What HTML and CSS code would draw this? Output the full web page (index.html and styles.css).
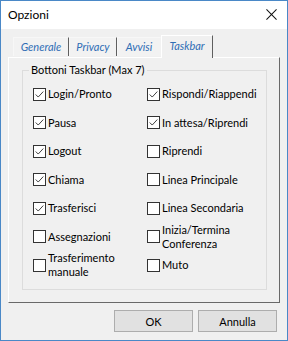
FILE: index.html
```html
<!DOCTYPE html>
<html>
<head>
<meta charset="utf-8">
<link rel="stylesheet" href="styles.css">
</head>
<body>
<div class="window">
  <div class="titlebar">
    <span class="title">Opzioni</span>
    <svg class="close" width="12" height="12" viewBox="0 0 12 12"><path d="M0.5 0.5 L11.5 11.5 M11.5 0.5 L0.5 11.5" stroke="#111" stroke-width="1.1" fill="none"/></svg>
  </div>
  <div class="content">
    <div class="tabs">
      <div class="tab t1">Generale</div>
      <div class="tab t2">Privacy</div>
      <div class="tab t3 nosep">Avvisi</div>
      <div class="tab t4 selected">Taskbar</div>
    </div>
    <div class="panel">
      <fieldset class="group">
        <legend>Bottoni Taskbar (Max 7)</legend>
        <div class="grid">
          <label class="cb"><span class="box on"><svg viewBox="0 0 13 13"><path d="M2 6.5 L5 9.5 L11 3" /></svg></span><span class="lbl">Login/Pronto</span></label>
          <label class="cb"><span class="box on"><svg viewBox="0 0 13 13"><path d="M2 6.5 L5 9.5 L11 3" /></svg></span><span class="lbl">Rispondi/Riappendi</span></label>
          <label class="cb"><span class="box on"><svg viewBox="0 0 13 13"><path d="M2 6.5 L5 9.5 L11 3" /></svg></span><span class="lbl">Pausa</span></label>
          <label class="cb"><span class="box on"><svg viewBox="0 0 13 13"><path d="M2 6.5 L5 9.5 L11 3" /></svg></span><span class="lbl">In attesa/Riprendi</span></label>
          <label class="cb"><span class="box on"><svg viewBox="0 0 13 13"><path d="M2 6.5 L5 9.5 L11 3" /></svg></span><span class="lbl">Logout</span></label>
          <label class="cb"><span class="box"></span><span class="lbl">Riprendi</span></label>
          <label class="cb"><span class="box on"><svg viewBox="0 0 13 13"><path d="M2 6.5 L5 9.5 L11 3" /></svg></span><span class="lbl">Chiama</span></label>
          <label class="cb"><span class="box"></span><span class="lbl">Linea Principale</span></label>
          <label class="cb"><span class="box on"><svg viewBox="0 0 13 13"><path d="M2 6.5 L5 9.5 L11 3" /></svg></span><span class="lbl">Trasferisci</span></label>
          <label class="cb"><span class="box"></span><span class="lbl">Linea Secondaria</span></label>
          <label class="cb"><span class="box"></span><span class="lbl">Assegnazioni</span></label>
          <label class="cb"><span class="box"></span><span class="lbl">Inizia/Termina<br>Conferenza</span></label>
          <label class="cb"><span class="box"></span><span class="lbl">Trasferimento<br>manuale</span></label>
          <label class="cb"><span class="box"></span><span class="lbl">Muto</span></label>
        </div>
      </fieldset>
    </div>
    <div class="buttons">
      <button class="btn">OK</button>
      <button class="btn">Annulla</button>
    </div>
  </div>
</div>
</body>
</html>
```
FILE: styles.css
```css
html, body {
  margin: 0;
  padding: 0;
  background: #f0f0f0;
}
.window {
  width: 288px;
  height: 341px;
  box-sizing: border-box;
  border: 1px solid #4a88c7;
  display: flex;
  flex-direction: column;
  font-family: Lato, "Liberation Sans", sans-serif;
  font-size: 11px;
  color: #000;
  background: #f0f0f0;
}
.titlebar {
  height: 27px;
  flex: none;
  background: #fff;
  display: flex;
  align-items: center;
  justify-content: space-between;
  padding: 0 10px 1px 7px;
}
.title {
  font-size: 12px;
}
.close {
  display: block;
  width: 11px;
  height: 11px;
}
.content {
  flex: 1;
  display: flex;
  flex-direction: column;
  padding-top: 6px;
}
.tabs {
  display: flex;
  align-items: flex-end;
  height: 22px;
  margin-left: 12px;
}
.tab {
  height: 19px;
  box-sizing: border-box;
  display: flex;
  align-items: center;
  justify-content: center;
  font-style: italic;
  color: #2f6db5;
  border-right: 1px solid #5f5f5f;
  border-top: 1px solid #f7f7f7;
  border-left: 1px solid #f7f7f7;
  background: #f2f2f2;
  padding-bottom: 1px;
  margin-bottom: 1px;
}
.tab.nosep {
  border-right-color: transparent;
}
.t1 { width: 56px; }
.t2 { width: 48px; }
.t3 { width: 44px; }
.t4 { width: 52px; }
.tab.selected {
  height: 23px;
  margin-bottom: -1px;
  position: relative;
  z-index: 1;
  background: #f0f0f0;
  border-left: 1px solid #fff;
  border-top: 1px solid #fff;
  border-right: 1px solid #5f5f5f;
  padding-bottom: 3px;
}
.panel {
  margin-left: 7px;
  width: 272px;
  height: 246px;
  box-sizing: border-box;
  border-top: 1px solid #fff;
  border-left: 1px solid #fff;
  border-right: 1px solid #696969;
  border-bottom: 1px solid #696969;
  padding: 5px 13px 0 13px;
}
.group {
  margin: 0;
  width: 245px;
  height: 227px;
  box-sizing: border-box;
  border: 1px solid #dcdcdc;
  padding: 0 0 0 10px;
}
.group legend {
  padding: 0 2px;
  margin-left: -4px;
  line-height: 14px;
}
.grid {
  display: grid;
  grid-template-columns: 114px 1fr;
  grid-auto-rows: 28.5px;
  padding-top: 3px;
}
.cb {
  display: flex;
  align-items: center;
  gap: 2px;
}
.box {
  width: 13px;
  height: 13px;
  box-sizing: border-box;
  border: 1px solid #333;
  background: #fff;
  flex: none;
  display: block;
}
.box svg {
  display: block;
  width: 11px;
  height: 11px;
  fill: none;
  stroke: #333;
  stroke-width: 1.1;
}
.lbl {
  line-height: 14px;
}
.buttons {
  display: flex;
  justify-content: flex-end;
  gap: 5px;
  padding: 7px 10px 0 0;
}
.btn {
  width: 79px;
  height: 22px;
  box-sizing: border-box;
  background: #e1e1e1;
  border: 1px solid #adadad;
  font-family: Lato, "Liberation Sans", sans-serif;
  font-size: 11px;
  color: #000;
  padding: 0;
  margin: 0;
}
```
